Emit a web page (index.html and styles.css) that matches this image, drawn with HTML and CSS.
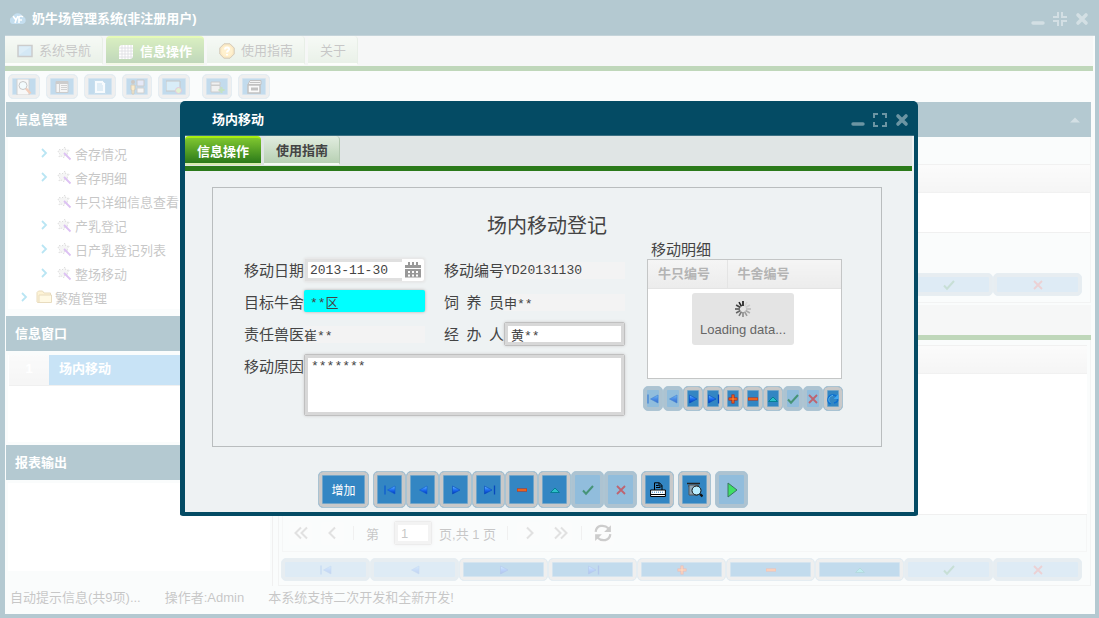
FILE: index.html
```html
<!DOCTYPE html>
<html lang="zh-CN">
<head>
    <meta charset="UTF-8">
    <meta name="viewport" content="width=device-width, initial-scale=1.0">
    <title>奶牛场管理系统</title>
    <link rel="stylesheet" href="styles.css">
</head>
<body>
    <!-- icones -->
    <svg class="sprite" width="0" height="0">
        <linearGradient id="azul" x1="0" y1="0" x2="0" y2="1"><stop offset="0" stop-color="#6cc0ff"/><stop offset="0.5" stop-color="#1c6cf0"/><stop offset="1" stop-color="#0038b8"/></linearGradient>
        <symbol id="i-first" viewBox="0 0 16 16"><path d="M3 3.500v9" stroke="#0d5bd0" stroke-width="1.300"/><path d="M13 4v8L5.500 8z" fill="url(#azul)" stroke="#0d5bd0" stroke-width=".6"/></symbol>
        <symbol id="i-prev" viewBox="0 0 16 16"><path d="M12 4v8L4.500 8z" fill="url(#azul)" stroke="#0d5bd0" stroke-width=".6"/></symbol>
        <symbol id="i-next" viewBox="0 0 16 16"><path d="M4.500 4v8L12 8z" fill="url(#azul)" stroke="#0648bd" stroke-width=".6"/></symbol>
        <symbol id="i-last" viewBox="0 0 16 16"><path d="M13.500 3.500v9" stroke="#0648bd" stroke-width="1.300"/><path d="M3.500 4v8L11 8z" fill="url(#azul)" stroke="#0648bd" stroke-width=".6"/></symbol>
        <symbol id="i-plus" viewBox="0 0 16 16"><path d="M8 3.500v9M3.500 8h9" stroke="#c81e00" stroke-width="3"/><path d="M8 4.200v7.600M4.200 8h7.600" stroke="#ff9a3c" stroke-width="1"/></symbol>
        <symbol id="i-minus" viewBox="0 0 16 16"><path d="M3 8h10" stroke="#d42a00" stroke-width="3"/><path d="M3.500 8h9" stroke="#ff9a3c"/></symbol>
        <symbol id="i-up" viewBox="0 0 16 16"><path d="M3.500 10.500h9L8 6z" fill="#2cc0c8" stroke="#077f94"/></symbol>
        <symbol id="i-check" viewBox="0 0 16 16"><path d="M3 8.500l3 3.200L13 4" fill="none" stroke="#157a35" stroke-width="2"/></symbol>
        <symbol id="i-cross" viewBox="0 0 16 16"><path d="M4 4l8 8M12 4l-8 8" stroke="#dc2a2a" stroke-width="1.800"/></symbol>
        <symbol id="i-reload" viewBox="0 0 16 16"><path d="M5.500 13C1 10 3 4 8 4c2 0 3.500 1 4 2.500M9 12c3-.5 4-2 3.500-4" fill="none" stroke="#0c6fd0" stroke-width="1.600"/><path d="M5 11.500C2.500 9 4 5 8 4.500" fill="none" stroke="#5cb8f0"/><path d="M8.500 8h5V3z" fill="#3fa6f0"/></symbol>
        <symbol id="i-min" viewBox="0 0 16 16"><path d="M3 12h10" stroke="#6c95a3" stroke-width="3.400" stroke-linecap="round"/></symbol>
        <symbol id="i-max" viewBox="0 0 16 16"><path d="M2 6V2h4M10 2h4v4M14 10v4h-4M6 14H2v-4" fill="none" stroke="#6c95a3" stroke-width="2"/></symbol>
        <symbol id="i-restore" viewBox="0 0 16 16"><path d="M1 6h5V1M10 1v5h5M15 10h-5v5M6 15v-5H1" fill="none" stroke="#6c95a3" stroke-width="2"/></symbol>
        <symbol id="i-close" viewBox="0 0 16 16"><path d="M4 4l8 8M12 4l-8 8" stroke="#6c95a3" stroke-width="3.600" stroke-linecap="round"/></symbol>
        <symbol id="i-arrow" viewBox="0 0 16 16"><path d="M5 4l4 4-4 4" fill="none" stroke="#17a9d8" stroke-width="1.800"/></symbol>
        <symbol id="i-wand" viewBox="0 0 16 16"><path d="M3 4.500L6 5l3-3 1 3.500L13.500 5 11 8l1 2-3-.5L8 13l-2-2-3 1 1-3-2-2z" fill="#dcdcdc" stroke="#8d8d8d" stroke-dasharray="1.500 1.500"/><path d="M8 8l6.500 6.500" stroke="#8b2fd6" stroke-width="1.800"/></symbol>
        <symbol id="i-folder" viewBox="0 0 16 16"><path d="M1 13V3.500L2.500 2h4L8 4h6.500v9.500h-13z" fill="#f7d672" stroke="#b38a2a"/><path d="M3 13V6h12.500v7.500H3z" fill="#fdeaa4" stroke="#b38a2a"/></symbol>
        <symbol id="i-screen" viewBox="0 0 16 16"><path d="M1 2.500h14v11H1z" fill="#6fb3dc" stroke="#555" stroke-width="1.500"/><path d="M2 3.500h12L2 12z" fill="#8cc4e4"/></symbol>
        <symbol id="i-grid" viewBox="0 0 16 16"><path d="M3 1h12v12l-2 2H1V3z" fill="#fff"/><path d="M1 4h14M1 7h14M1 10h14M1 13h14M4 1v14M7 1v14M10 1v14M13 1v14" stroke="#8b8b9c" stroke-width=".8"/></symbol>
        <symbol id="i-help" viewBox="0 0 16 16"><path d="M5 .8h6L15.200 5v6L11 15.200H5L.8 11V5z" fill="#f5b83c" stroke="#6b4a12"/><circle cx="8" cy="8" r="5.500" fill="#ffd060"/><path d="M6 6.500c0-3 4.500-2.500 4 0-.3 1.200-2 1.200-2 3M8 11v1.500" fill="none" stroke="#fff" stroke-width="2"/></symbol>
        <symbol id="i-search" viewBox="0 0 16 16"><path d="M1 0h12v16H1z" fill="#e7e7e7" stroke="#666"/><circle cx="7" cy="6.500" r="4" fill="#d6f0f8" stroke="#444"/><path d="M10 9.500l4.500 5" stroke="#d2571b" stroke-width="2.400"/></symbol>
        <symbol id="i-table" viewBox="0 0 16 16"><path d="M2 2.500h12v11H2z" fill="#ddd" stroke="#555"/><path d="M2 4h12" stroke="#555" stroke-width="2"/><path d="M5.500 4v9M7 6.500h6M7 8.500h6M7 10.500h6" stroke="#666"/></symbol>
        <symbol id="i-page" viewBox="0 0 16 16"><path d="M2.500 1.500h8l3 3v10h-11z" fill="#e3f2fb" stroke="#4892c4"/><path d="M5 5h5M5 7h6M5 9h6M5 11h6" stroke="#4892c4"/></symbol>
        <symbol id="i-user" viewBox="0 0 16 16"><path d="M8 1h7v6H8z" fill="#a8b6e8" stroke="#555"/><path d="M8 9h7v5H8z" fill="#ddd" stroke="#666"/><circle cx="4" cy="3" r="2" fill="#5b4632"/><path d="M2 6h4v5H5v4H3v-4H2z" fill="#f2bd4a" stroke="#6b5522"/></symbol>
        <symbol id="i-screen2" viewBox="0 0 16 16"><path d="M0 2h14v10H0z" fill="#81c4e8" stroke="#444"/><circle cx="12.500" cy="11.500" r="3" fill="#9ed36a" stroke="#a04a8a"/></symbol>
        <symbol id="i-dbadd" viewBox="0 0 16 16"><path d="M2 3h9v3H2zM2 6.500h9V13H2z" fill="#ccc" stroke="#555"/><path d="M12.500 8v6M9.500 11h6" stroke="#3a9e34" stroke-width="2"/></symbol>
        <symbol id="i-form" viewBox="0 0 16 16"><path d="M4 1.500h11v4H2z" fill="#ddd" stroke="#333"/><path d="M2 6h12v8H2z" fill="#eee" stroke="#333" stroke-width="1.500"/><path d="M5 10h7" stroke="#333" stroke-width="3"/><path d="M4 3.500h10" stroke="#333"/></symbol>
        <symbol id="i-print" viewBox="0 0 16 16"><path d="M4.500 8V.8h5L12 3.500V8" fill="#3386c3" stroke="#000"/><path d="M6 3.500h2.500M6 5.500h4.500M9 1v3h3" fill="none" stroke="#000"/><path d="M.6 8h14.800v6.500H.6z" fill="#fff" stroke="#000"/><path d="M1 12.500h14" stroke="#000"/><path d="M2 10.200h12" stroke="#3386c3" stroke-dasharray="1 1"/></symbol>
        <symbol id="i-preview" viewBox="0 0 16 16"><path d="M0 1.500h13M1.500 4h10" stroke="#222" stroke-width="1.500"/><path d="M2 3h9v10H2z" fill="#8fa5b5" stroke="#555"/><circle cx="9.500" cy="8.500" r="4.500" fill="#b8edff" stroke="#111"/><path d="M13 12l2.500 2.500" stroke="#111" stroke-width="2.400"/></symbol>
        <symbol id="i-play" viewBox="0 0 16 16"><path d="M4 1v14L13 8z" fill="#3fe065" stroke="#3b7660"/></symbol>
        <symbol id="i-pgprev" viewBox="0 0 16 16"><path d="M10 2.500L4.500 8l5.500 5.500" fill="none" stroke="#999" stroke-width="2"/></symbol>
        <symbol id="i-pgfirst" viewBox="0 0 16 16"><path d="M8 2.500L2.500 8 8 13.500M14 2.500L8.500 8l5.500 5.500" fill="none" stroke="#999" stroke-width="2"/></symbol>
        <symbol id="i-pgnext" viewBox="0 0 16 16"><path d="M6 2.500L11.500 8 6 13.500" fill="none" stroke="#999" stroke-width="2"/></symbol>
        <symbol id="i-pglast" viewBox="0 0 16 16"><path d="M2 2.500L7.500 8 2 13.500M8 2.500L13.500 8 8 13.500" fill="none" stroke="#999" stroke-width="2"/></symbol>
        <symbol id="i-pgload" viewBox="0 0 16 16"><path d="M1.500 7C2 1 9 0 13 4M14.500 9C14 15 7 16 3 12" fill="none" stroke="#555" stroke-width="2"/><path d="M15 1v6H9zM1 15V9h6z" fill="#555"/></symbol>
        <symbol id="i-calendar" viewBox="0 0 16 16"><path d="M0 3h16v3H0zM0 7h16v8.500H0zM3 0h2v4H3zM7 0h2v3H7zM11 0h2v4h-2z" fill="#999"/><path d="M3 9h2v2H3zM7 9h2v2H7zM11 9h2v2h-2zM3 12.500h2v2H3zM7 12.500h2v2H7zM11 12.500h2v2h-2z" fill="#fff"/></symbol>
        <symbol id="i-spin" viewBox="0 0 16 16"><g stroke-width="1.600"><path d="M8 0v5" stroke="#111"/><path d="M4 1.100l2.500 4.300" stroke="#222"/><path d="M1.100 4l4.300 2.500" stroke="#444"/><path d="M0 8h5" stroke="#555"/><path d="M1.100 12l4.300-2.500" stroke="#666"/><path d="M4 14.900l2.500-4.300" stroke="#777"/><path d="M8 16v-5" stroke="#888"/><path d="M12 14.900l-2.500-4.300" stroke="#999"/><path d="M14.900 12l-4.300-2.500" stroke="#aaa"/><path d="M16 8h-5" stroke="#bbb"/><path d="M14.900 4l-4.300 2.500" stroke="#ccc"/><path d="M12 1.100L9.500 5.400" stroke="#d4d4d4"/></g></symbol>
    </svg>

    <div class="janela">
        <header class="titulo">
            <svg class="logo" viewBox="0 0 16 16"><path d="M3.500 13a3.500 3.500 0 0 1-.5-7 5 5 0 0 1 9.500-.5A3.800 3.800 0 0 1 12.500 13z" fill="#3a8fc9"/><path d="M3 5l3 4 2-4M6 9l-1 3M9 12V6c1-1 3-1 4 0M9 9h3" fill="none" stroke="#fff" stroke-width="1.600"/></svg>
            <h1>奶牛场管理系统(非注册用户)</h1>
            <button class="ctl" aria-label="最小化"><svg><use href="#i-min"/></svg></button>
            <button class="ctl" aria-label="还原"><svg><use href="#i-restore"/></svg></button>
            <button class="ctl" aria-label="关闭"><svg><use href="#i-close"/></svg></button>
        </header>

        <nav class="abas">
            <button class="aba"><svg><use href="#i-screen"/></svg>系统导航</button>
            <button class="aba aba-ativa"><svg><use href="#i-grid"/></svg>信息操作</button>
            <button class="aba"><svg><use href="#i-help"/></svg>使用指南</button>
            <button class="aba">关于</button>
        </nav>

        <div class="ferramentas">
            <button class="btn" aria-label="查询"><svg><use href="#i-search"/></svg></button>
            <button class="btn" aria-label="表格"><svg><use href="#i-table"/></svg></button>
            <button class="btn" aria-label="文档"><svg><use href="#i-page"/></svg></button>
            <button class="btn estreito" aria-label="用户"><svg><use href="#i-user"/></svg></button>
            <button class="btn" aria-label="窗口"><svg><use href="#i-screen2"/></svg></button>
            <button class="btn estreito grupo" aria-label="添加"><svg><use href="#i-dbadd"/></svg></button>
            <button class="btn" aria-label="表单"><svg><use href="#i-form"/></svg></button>
        </div>

        <main class="principal">
            <aside class="lateral">
                <h2 class="painel-titulo">信息管理</h2>
                <ul class="arvore">
                    <li><svg><use href="#i-arrow"/></svg><svg><use href="#i-wand"/></svg>舍存情况</li>
                    <li><svg><use href="#i-arrow"/></svg><svg><use href="#i-wand"/></svg>舍存明细</li>
                    <li><svg></svg><svg><use href="#i-wand"/></svg>牛只详细信息查看</li>
                    <li><svg><use href="#i-arrow"/></svg><svg><use href="#i-wand"/></svg>产乳登记</li>
                    <li><svg><use href="#i-arrow"/></svg><svg><use href="#i-wand"/></svg>日产乳登记列表</li>
                    <li><svg><use href="#i-arrow"/></svg><svg><use href="#i-wand"/></svg>整场移动</li>
                    <li class="pasta"><svg><use href="#i-arrow"/></svg><svg><use href="#i-folder"/></svg>繁殖管理</li>
                </ul>
                <h2 class="painel-titulo">信息窗口</h2>
                <div class="lista">
                    <div class="linha"><span class="numero">1</span><span class="nome">场内移动</span></div>
                </div>
                <h2 class="painel-titulo">报表输出</h2>
                <div class="vazio"></div>
            </aside>

            <section class="dados">
                <div class="painel-titulo painel-direita"><svg viewBox="0 0 10 6"><path d="M0 5.500h10L5 .5z" fill="#6c95a3"/></svg></div>
                <div class="grade">
                    <div class="grade-topo"></div>
                    <div class="grade-corpo curto"></div>
                    <div class="grade-pe"></div>
                    <div class="barra larga">
                        <button class="btn" disabled aria-label="首条"><svg><use href="#i-first"/></svg></button>
                        <button class="btn" disabled aria-label="上一条"><svg><use href="#i-prev"/></svg></button>
                        <button class="btn" aria-label="下一条"><svg><use href="#i-next"/></svg></button>
                        <button class="btn" aria-label="末条"><svg><use href="#i-last"/></svg></button>
                        <button class="btn" aria-label="新增"><svg><use href="#i-plus"/></svg></button>
                        <button class="btn" aria-label="删除"><svg><use href="#i-minus"/></svg></button>
                        <button class="btn" aria-label="编辑"><svg><use href="#i-up"/></svg></button>
                        <button class="btn" disabled aria-label="保存"><svg><use href="#i-check"/></svg></button>
                        <button class="btn" disabled aria-label="取消"><svg><use href="#i-cross"/></svg></button>
                    </div>
                </div>
                <div class="abas abas-vazias"></div>
                <div class="grade grade-baixo">
                    <div class="grade-topo"></div>
                    <div class="grade-corpo"></div>
                    <div class="paginas">
                        <button class="pg" disabled aria-label="首页"><svg><use href="#i-pgfirst"/></svg></button>
                        <button class="pg" disabled aria-label="上一页"><svg><use href="#i-pgprev"/></svg></button>
                        <i class="sep"></i>
                        <label for="pagina">第</label>
                        <input id="pagina" class="campo" type="text" value="1">
                        <span>页,共 1 页</span>
                        <i class="sep"></i>
                        <button class="pg" disabled aria-label="下一页"><svg><use href="#i-pgnext"/></svg></button>
                        <button class="pg" disabled aria-label="末页"><svg><use href="#i-pglast"/></svg></button>
                        <i class="sep"></i>
                        <button class="pg pg-ativo" aria-label="刷新"><svg><use href="#i-pgload"/></svg></button>
                    </div>
                    <div class="barra larga">
                        <button class="btn" disabled aria-label="首条"><svg><use href="#i-first"/></svg></button>
                        <button class="btn" disabled aria-label="上一条"><svg><use href="#i-prev"/></svg></button>
                        <button class="btn" aria-label="下一条"><svg><use href="#i-next"/></svg></button>
                        <button class="btn" aria-label="末条"><svg><use href="#i-last"/></svg></button>
                        <button class="btn" aria-label="新增"><svg><use href="#i-plus"/></svg></button>
                        <button class="btn" aria-label="删除"><svg><use href="#i-minus"/></svg></button>
                        <button class="btn" aria-label="编辑"><svg><use href="#i-up"/></svg></button>
                        <button class="btn" disabled aria-label="保存"><svg><use href="#i-check"/></svg></button>
                        <button class="btn" disabled aria-label="取消"><svg><use href="#i-cross"/></svg></button>
                    </div>
                </div>
            </section>
        </main>

        <footer class="rodape">
            <span>自动提示信息(共9项)...</span>
            <span>操作者:Admin</span>
            <span>本系统支持二次开发和全新开发!</span>
        </footer>
    </div>

    <div class="mascara">
        <div class="dialogo" role="dialog" aria-labelledby="dlg-titulo">
            <header class="titulo dlg-topo">
                <h2 id="dlg-titulo">场内移动</h2>
                <button class="ctl" aria-label="最小化"><svg><use href="#i-min"/></svg></button>
                <button class="ctl" aria-label="最大化"><svg><use href="#i-max"/></svg></button>
                <button class="ctl" aria-label="关闭"><svg><use href="#i-close"/></svg></button>
            </header>
            <nav class="abas">
                <button class="aba aba-ativa">信息操作</button>
                <button class="aba">使用指南</button>
            </nav>

            <form class="ficha">
                <h3>场内移动登记</h3>
                <div class="colunas">
                    <div class="campos">
                        <label for="data">移动日期</label>
                        <div class="data">
                            <input id="data" type="text" value="2013-11-30">
                            <button type="button" aria-label="选择日期"><svg><use href="#i-calendar"/></svg></button>
                        </div>
                        <label for="codigo" class="seg">移动编号</label>
                        <input id="codigo" class="leitura" type="text" value="YD20131130" readonly>

                        <label for="destino">目标牛舍</label>
                        <input id="destino" class="foco" type="text" value="**区">
                        <label for="tratador" class="seg">饲 养 员</label>
                        <input id="tratador" class="leitura" type="text" value="申**" readonly>

                        <label for="veterinario">责任兽医</label>
                        <input id="veterinario" class="leitura" type="text" value="崔**" readonly>
                        <label for="operador" class="seg">经 办 人</label>
                        <input id="operador" class="campo" type="text" value="黄**">

                        <label for="motivo">移动原因</label>
                        <textarea id="motivo" class="campo">*******</textarea>
                    </div>

                    <div class="detalhe">
                        <div class="legenda">移动明细</div>
                        <div class="tabela">
                            <table>
                                <thead><tr><th>牛只编号</th><th>牛舍编号</th></tr></thead>
                            </table>
                            <div class="carregando"><svg><use href="#i-spin"/></svg>Loading data...</div>
                        </div>
                        <div class="barra mini">
                            <button type="button" class="btn" disabled aria-label="首条"><svg><use href="#i-first"/></svg></button>
                            <button type="button" class="btn" disabled aria-label="上一条"><svg><use href="#i-prev"/></svg></button>
                            <button type="button" class="btn" aria-label="下一条"><svg><use href="#i-next"/></svg></button>
                            <button type="button" class="btn" aria-label="末条"><svg><use href="#i-last"/></svg></button>
                            <button type="button" class="btn" aria-label="新增"><svg><use href="#i-plus"/></svg></button>
                            <button type="button" class="btn" aria-label="删除"><svg><use href="#i-minus"/></svg></button>
                            <button type="button" class="btn" aria-label="编辑"><svg><use href="#i-up"/></svg></button>
                            <button type="button" class="btn" disabled aria-label="保存"><svg><use href="#i-check"/></svg></button>
                            <button type="button" class="btn" disabled aria-label="取消"><svg><use href="#i-cross"/></svg></button>
                            <button type="button" class="btn" aria-label="刷新"><svg><use href="#i-reload"/></svg></button>
                        </div>
                    </div>
                </div>
            </form>

            <div class="acoes">
                <button class="btn btn-texto">增加</button>
                <div class="barra">
                    <button class="btn" aria-label="首条"><svg><use href="#i-first"/></svg></button>
                    <button class="btn" aria-label="上一条"><svg><use href="#i-prev"/></svg></button>
                    <button class="btn" aria-label="下一条"><svg><use href="#i-next"/></svg></button>
                    <button class="btn" aria-label="末条"><svg><use href="#i-last"/></svg></button>
                    <button class="btn" aria-label="删除"><svg><use href="#i-minus"/></svg></button>
                    <button class="btn" aria-label="编辑"><svg><use href="#i-up"/></svg></button>
                    <button class="btn" disabled aria-label="保存"><svg><use href="#i-check"/></svg></button>
                    <button class="btn" disabled aria-label="取消"><svg><use href="#i-cross"/></svg></button>
                </div>
                <button class="btn" aria-label="打印"><svg><use href="#i-print"/></svg></button>
                <button class="btn" aria-label="预览"><svg><use href="#i-preview"/></svg></button>
                <button class="btn btn-claro" aria-label="运行"><svg><use href="#i-play"/></svg></button>
            </div>
        </div>
    </div>
</body>
</html>
```
FILE: styles.css
```css
* {
    box-sizing: border-box;
}
body {
    margin: 0;
    font-family: "Liberation Sans", "Noto Sans CJK SC", sans-serif;
    font-size: 13px;
    color: #444;
}
button, input, textarea {
    font: inherit;
    color: inherit;
    margin: 0;
    padding: 0;
    border: none;
    background: none;
}
h1, h2, h3, ul {
    margin: 0;
    padding: 0;
}
svg {
    width: 16px;
    height: 16px;
    flex: none;
}
.sprite {
    position: absolute;
    width: 0;
    height: 0;
}

/* janela principal */
.janela {
    display: flex;
    flex-direction: column;
    height: 100vh;
    min-height: 618px;
    border: solid #044b64;
    border-width: 0 4px 4px 5px;
    background: #eef3f4;
}
.titulo {
    display: flex;
    align-items: center;
    height: 36px;
    padding: 2px 5px 0;
    background: #044b64;
    border-bottom: 1px solid #3d7183;
    color: #fff;
}
.titulo h1, .titulo h2 {
    flex: 1;
    font-size: 13px;
    line-height: 20px;
}
.logo {
    margin-right: 6px;
}
.ctl {
    display: flex;
    margin-left: 6px;
}

/* abas */
.abas {
    display: flex;
    gap: 3px;
    height: 35px;
    margin-right: 2px;
    background: #e0e5e5;
    border-bottom: 5px solid #2b7a1a;
}
.aba {
    display: flex;
    align-items: center;
    gap: 6px;
    height: 29px;
    padding: 3px 11px 0 12px;
    line-height: 20px;
    background: linear-gradient(#e2ede0, #b7d0b3);
    border-bottom: 2px solid #f4faf2;
    border-right: 1px solid #b2c8b0;
    border-radius: 4px 4px 0 0;
}
.aba-ativa {
    padding: 2px 12px 0;
    background: linear-gradient(#7fc62f, #2b7a1a);
    border-top: 2px solid #a8ee10;
    border-bottom: 2px solid #d7ecae;
    border-right: none;
    color: #fff;
    font-weight: bold;
}
.ferramentas {
    display: flex;
    gap: 6px;
    height: 31px;
    padding: 3px;
}
.grupo {
    margin-left: 6px;
}

/* botoes azuis */
.btn {
    display: flex;
    flex: none;
    align-items: center;
    justify-content: center;
    width: 32px;
    height: 25px;
    background: #3386c3;
    border: 1px solid #a9c3d2;
    border-radius: 5px;
    box-shadow: inset 0 0 0 3px #c9c9c9, inset 0 0 0 4px #72a5c8;
}
.btn:disabled, .btn-claro {
    background: #91bddc;
    border-color: #adc5d3;
    box-shadow: inset 0 0 0 3px #adc3d1;
}
.btn:disabled svg {
    opacity: 0.6;
}
.estreito {
    width: 30px;
}
.barra {
    display: flex;
}
.larga {
    padding: 0 8px 0 2px;
}
.larga .btn {
    flex: 1;
    height: 23px;
}
.mini {
    margin: 7px 0 0 -4px;
}
.mini .btn {
    width: 20px;
}

/* conteudo */
.principal {
    display: flex;
    flex: 1;
    gap: 5px;
    padding: 0 4px 0 1px;
}
.lateral {
    display: flex;
    flex-direction: column;
    width: 267px;
    border-right: 1px solid #ccc;
}
.painel-titulo {
    flex: none;
    height: 35px;
    padding: 0 9px;
    font-size: 13px;
    line-height: 35px;
    background: #044b64;
    color: #fff;
}
.arvore {
    height: 172px;
    margin: 0 2px 7px;
    padding-top: 4px;
    background: #fff;
    list-style: none;
}
.arvore li {
    display: flex;
    align-items: center;
    gap: 3px;
    height: 24px;
    padding-left: 29px;
    white-space: nowrap;
}
.arvore .pasta {
    padding-left: 9px;
}
.lista {
    height: 87px;
    margin: 4px 2px 3px;
    padding: 0 1px;
    background: #fff;
}
.linha {
    display: flex;
    height: 31px;
    line-height: 27px;
    background: #48a2e1;
    border-bottom: 1px solid #ccc;
    color: #fff;
}
.numero {
    width: 40px;
    text-align: center;
    font-weight: bold;
    background: linear-gradient(#f0f0f0, #dfdfdf);
}
.nome {
    padding-left: 10px;
    font-weight: bold;
}
.vazio {
    flex: 1;
    margin: 3px 2px 15px;
    background: #fff;
}
.dados {
    display: flex;
    flex-direction: column;
    flex: 1;
}
.painel-direita {
    display: flex;
    align-items: center;
    justify-content: flex-end;
    padding: 0 11px;
}
.painel-direita svg {
    width: 10px;
    height: 6px;
}
.grade {
    padding: 27px 0 6px;
    border: solid #d4d8d8;
    border-width: 0 1px 1px 1px;
}
.grade-topo {
    height: 29px;
    background: linear-gradient(#f2f2f2, #dedede);
    border: 1px solid #d0d0d0;
    border-width: 1px 0;
}
.grade-corpo {
    flex: 1;
    background: #fff;
    border-bottom: 1px solid #ccc;
}
.curto {
    height: 40px;
}
.grade-pe {
    height: 40px;
}
.abas-vazias {
    margin: 2px 0 0;
}
.grade-baixo {
    display: flex;
    flex-direction: column;
    flex: 1;
    padding: 5px 0 4px;
}
.grade-baixo .grade-topo, .grade-baixo .grade-corpo, .paginas {
    margin: 0 3px;
}
.grade-baixo .paginas {
    display: flex;
    align-items: center;
    height: 37px;
    margin-bottom: 6px;
    padding-left: 6px;
    border: solid #dde1e1;
    border-width: 0 1px 1px;
}
.paginas label {
    margin: 0 15px 0 12px;
}
.paginas .campo {
    width: 38px;
    height: 24px;
    margin-right: 7px;
}
.pg {
    display: flex;
    align-items: center;
    justify-content: center;
    width: 23px;
    height: 23px;
    margin-right: 9px;
    background: #f2f4f4;
    border-radius: 3px;
}
.pg-ativo svg {
    width: 18px;
    height: 18px;
}
.sep {
    width: 1px;
    height: 14px;
    margin-right: 9px;
    background: #ccc;
}
.paginas span {
    margin-right: 11px;
}
.paginas .sep:nth-of-type(1) {
    margin-right: 0;
}
.rodape {
    display: flex;
    gap: 24px;
    height: 28px;
    padding: 0 5px;
    line-height: 24px;
}

/* dialogo */
.mascara {
    position: absolute;
    inset: 0;
    display: flex;
    align-items: center;
    justify-content: center;
    padding: 0 1px 1px 0;
    background: rgba(255, 255, 255, 0.7);
}
.dialogo {
    width: 738px;
    max-width: 100%;
    border: solid #044b64;
    border-width: 0 4px 4px 5px;
    border-radius: 5px 5px 3px 3px;
    background: #eef2f3;
}
.dlg-topo {
    height: 35px;
    padding: 4px 4px 0 27px;
}
.dialogo .aba {
    font-weight: bold;
}
.ficha {
    margin: 16px 32px 24px 27px;
    padding: 26px 39px 30px 31px;
    border: 1px solid #b9bdbe;
}
.ficha h3 {
    font-size: 20px;
    font-weight: normal;
    line-height: 24px;
    margin-bottom: 4px;
    padding-left: 8px;
    text-align: center;
}
.colunas {
    display: flex;
    justify-content: space-between;
}
.campos {
    display: grid;
    grid-template-columns: 60px 121px 79px 121px;
    grid-template-rows: 24px 24px 24px 62px;
    row-gap: 8px;
    padding-top: 16px;
    font-family: "Liberation Mono", "Noto Sans CJK SC", monospace;
}
.campos label, .legenda {
    font-family: "Noto Sans CJK SC", sans-serif;
    font-size: 15px;
    line-height: 24px;
}
.campos .seg {
    margin-left: 19px;
    text-align-last: justify;
}
.campo {
    min-width: 0;
    padding: 0 3px 0 6px;
    background: #fff;
    border: 1px solid #c0c0c0;
    border-radius: 2px;
    outline: 3px solid #d8d8d8;
    outline-offset: -4px;
    box-shadow: 0 0 3px #ccc;
}
.campos textarea {
    grid-column: 2 / 5;
    padding-top: 4px;
    resize: none;
}
.data {
    display: flex;
    background: #fff;
    border: 1px solid #e8e8e8;
    border-radius: 3px;
    box-shadow: 0 0 3px #ddd;
}
.data input {
    flex: 1;
    min-width: 0;
    padding-left: 2px;
    border: solid #e0e0e0;
    border-width: 3px 0 3px 3px;
}
.data button {
    display: flex;
    align-items: center;
    padding: 0 3px;
}
.foco {
    min-width: 0;
    height: 22px;
    padding-left: 6px;
    background: #0ff;
    border-radius: 2px;
    box-shadow: 0 0 3px #aaa;
}
.leitura {
    min-width: 0;
    height: 17px;
    align-self: center;
    background: #f3f3f3;
}
.detalhe {
    width: 195px;
}
.detalhe .legenda {
    height: 17px;
    line-height: 14px;
    padding-left: 4px;
}
.tabela {
    position: relative;
    height: 120px;
    background: #fff;
    border: 1px solid #c4c6c6;
}
.tabela table {
    width: 100%;
    border-collapse: collapse;
    table-layout: fixed;
}
.tabela th {
    height: 28px;
    padding: 0 10px;
    line-height: 20px;
    background: linear-gradient(#f5f5f5, #ececec);
    border-bottom: 1px solid #e4e4e4;
    color: #b4b4b4;
    text-align: left;
}
.tabela th:first-child {
    width: 79px;
    border-right: 1px solid #e4e4e4;
}
.carregando {
    position: absolute;
    top: 33px;
    left: 44px;
    display: flex;
    flex-direction: column;
    align-items: center;
    gap: 4px;
    width: 102px;
    height: 52px;
    padding: 8px 0;
    background: #e4e4e4;
    border-radius: 3px;
    line-height: 18px;
    color: #666;
}

.acoes {
    display: flex;
    gap: 4px;
    padding: 0 0 4px 133px;
}
.acoes .btn {
    width: 33px;
    height: 37px;
}
.acoes .btn-texto {
    width: 51px;
    font-size: 12px;
    color: #fff;
}
```
